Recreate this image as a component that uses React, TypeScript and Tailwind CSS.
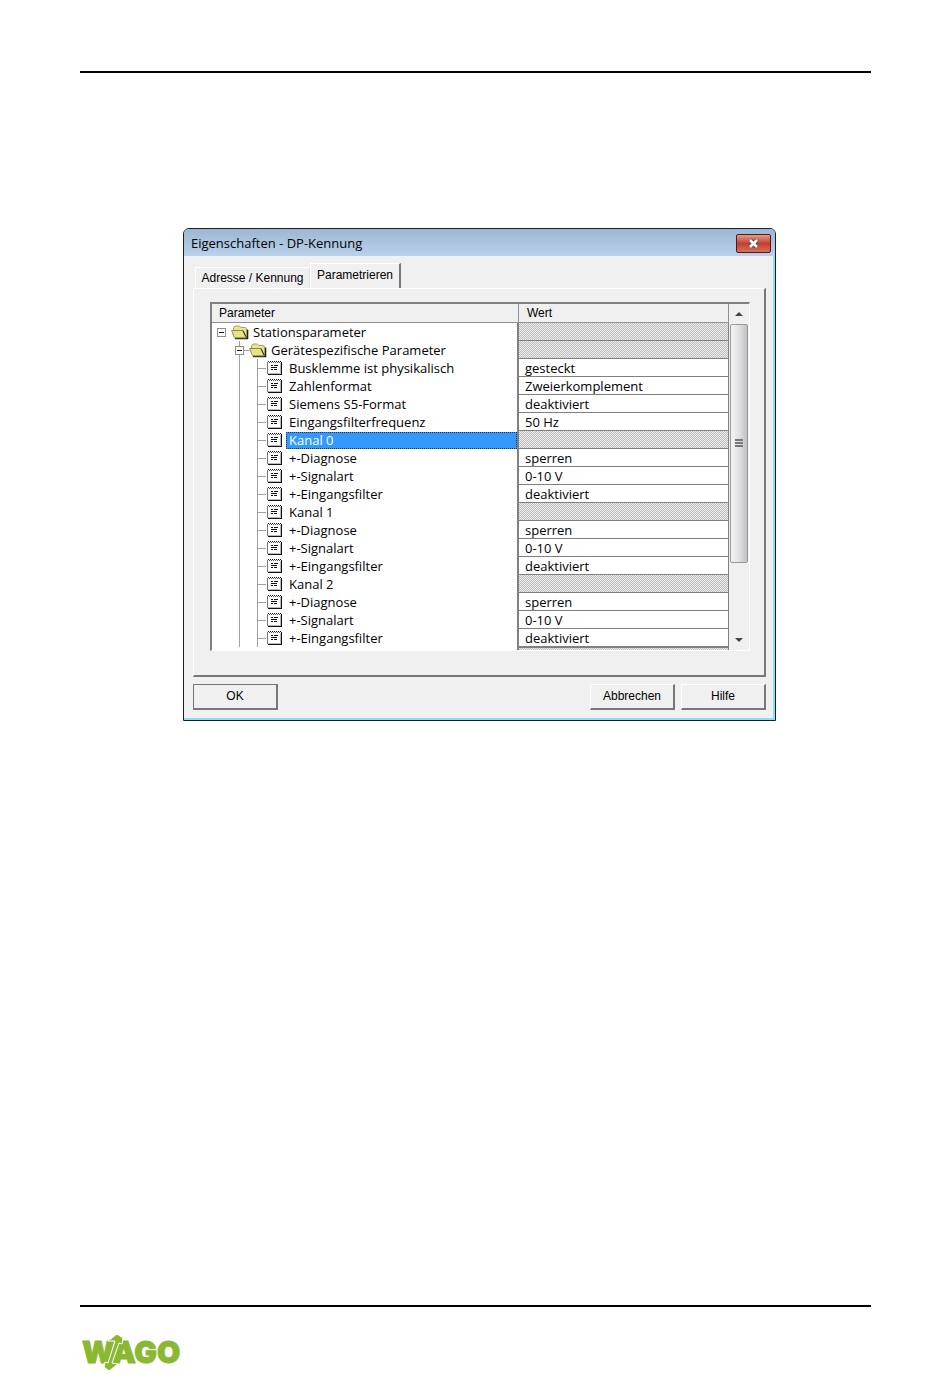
import clsx from 'clsx'

type Row = {
  label: string
  value?: string
  level: number
  selected?: boolean
}

const rows: Row[] = [
  { label: 'Stationsparameter', level: 0 },
  { label: 'Gerätespezifische Parameter', level: 1 },
  { label: 'Busklemme ist physikalisch', value: 'gesteckt', level: 2 },
  { label: 'Zahlenformat', value: 'Zweierkomplement', level: 2 },
  { label: 'Siemens S5-Format', value: 'deaktiviert', level: 2 },
  { label: 'Eingangsfilterfrequenz', value: '50 Hz', level: 2 },
  { label: 'Kanal 0', level: 2, selected: true },
  { label: '+-Diagnose', value: 'sperren', level: 2 },
  { label: '+-Signalart', value: '0-10 V', level: 2 },
  { label: '+-Eingangsfilter', value: 'deaktiviert', level: 2 },
  { label: 'Kanal 1', level: 2 },
  { label: '+-Diagnose', value: 'sperren', level: 2 },
  { label: '+-Signalart', value: '0-10 V', level: 2 },
  { label: '+-Eingangsfilter', value: 'deaktiviert', level: 2 },
  { label: 'Kanal 2', level: 2 },
  { label: '+-Diagnose', value: 'sperren', level: 2 },
  { label: '+-Signalart', value: '0-10 V', level: 2 },
  { label: '+-Eingangsfilter', value: 'deaktiviert', level: 2 },
]

const hatch =
  'bg-[repeating-conic-gradient(#c0c0c0_0%_25%,#ececec_0%_50%)] bg-[length:2px_2px]'

function Collapse({ root }: { root?: boolean }) {
  return (
    <svg className="h-[18px] w-[18px] shrink-0" viewBox="0 0 18 18" shapeRendering="crispEdges" fill="none">
      {!root && <path d="M8.5 0v5M8.5 14v4M13 9.5h5" stroke="#a0a0a0" />}
      <rect x="4.5" y="5.5" width="8" height="8" fill="#fff" stroke="#8c8c8c" />
      <path d="M6 9.5h5" stroke="#111" />
    </svg>
  )
}

function Guide({ branch }: { branch?: boolean }) {
  return (
    <svg className="h-[18px] w-[18px] shrink-0" viewBox="0 0 18 18" shapeRendering="crispEdges" fill="none">
      <path d={branch ? 'M8.5 0v18M9 9.5h8' : 'M8.5 0v18'} stroke="#a0a0a0" />
    </svg>
  )
}

function FolderIcon() {
  return (
    <svg className="h-[18px] w-[18px] shrink-0" viewBox="0 0 18 18">
      <path d="M4 15.5h12.500V6.500" fill="none" stroke="#222" strokeWidth="1.600" />
      <path d="M2.500 7V4.500L4 3h4.500l1.500 1.500h4.500l1 1.500v8.500H5z" fill="#e9e58c" stroke="#a3a057" />
      <path d="M.6 7.500h10.900l3.500 7.300H3.500z" fill="#f1ef9c" stroke="#8d8a3c" />
      <path d="M2.500 9h9M3.500 11h9M4.500 13h9" stroke="#c2c25c" strokeDasharray="1 1" />
      <path d="M12 7.500l3.500 7" stroke="#333" />
    </svg>
  )
}

function SheetIcon() {
  return (
    <svg className="h-[18px] w-[18px] shrink-0" viewBox="0 0 18 18" shapeRendering="crispEdges" fill="none">
      <path d="M.5 3v12" stroke="#777" />
      <path d="M1 2.500h13" stroke="#111" strokeDasharray="1 1" />
      <path d="M2 3.500h12" stroke="#555" strokeDasharray="1 1" />
      <path d="M1 15.500h14M14.500 3v13" stroke="#111" />
      <path d="M1 14.500h13M13.500 4v11" stroke="#bbb" />
      <path d="M4 6.500h2M7 6.500h4M4 8.500h6M4 10.500h2M7 10.500h3" stroke="#111" />
    </svg>
  )
}

function ParameterRow({ row }: { row: Row }) {
  return (
    <tr className="h-[18px]">
      <td className="border-r-2 border-[#808080] p-0 pl-px">
        <div className="flex h-[18px] items-center">
          {row.level === 0 && <Collapse root />}
          {row.level === 1 && (
            <>
              <span className="w-[18px] shrink-0" />
              <Collapse />
            </>
          )}
          {row.level === 2 && (
            <>
              <span className="w-[18px] shrink-0" />
              <Guide />
              <Guide branch />
            </>
          )}
          {row.level < 2 ? <FolderIcon /> : <SheetIcon />}
          <span
            className={clsx(
              'ml-px flex h-[17px] min-w-0 flex-1 items-center overflow-hidden whitespace-nowrap border border-dotted pl-[2px]',
              row.selected ? 'border-[#14325a] bg-[#3399ff] text-white' : 'border-transparent',
            )}
          >
            {row.label}
          </span>
        </div>
      </td>
      <td className={clsx('border-b border-r border-[#808080] p-0 pl-[6px] whitespace-nowrap', !row.value && hatch)}>
        {row.value}
      </td>
    </tr>
  )
}

function ScrollBar() {
  return (
    <div className="flex w-[20px] shrink-0 flex-col bg-[#f0f0f0]">
      <button aria-label="Nach oben" className="flex h-5 items-center justify-center">
        <svg className="h-[4px] w-[8px]" viewBox="0 0 8 4">
          <path d="M0 4 4 0l4 4z" fill="#444" />
        </svg>
      </button>
      <div className="flex-1 px-px">
        <div className="flex h-[78%] flex-col items-center justify-center gap-px rounded-[2px] border border-[#999] bg-gradient-to-r from-[#f5f5f5] via-[#e2e2e4] to-[#bfc0c4]">
          <span className="h-[2px] w-[8px] bg-[#777]" />
          <span className="h-[2px] w-[8px] bg-[#777]" />
          <span className="h-[2px] w-[8px] bg-[#777]" />
        </div>
      </div>
      <button aria-label="Nach unten" className="flex h-5 items-center justify-center">
        <svg className="h-[4px] w-[8px]" viewBox="0 0 8 4">
          <path d="M0 0h8L4 4z" fill="#444" />
        </svg>
      </button>
    </div>
  )
}

function DialogButton({ label, isDefault }: { label: string; isDefault?: boolean }) {
  return (
    <button
      className={clsx(
        'h-[26px] w-[85px] border-t border-l border-r-2 border-b-2 bg-[#f0f0f0] pb-px',
        isDefault ? 'border-[#777]' : 'border-t-white border-r-[#777] border-b-[#777] border-l-white',
      )}
    >
      {label}
    </button>
  )
}

function PropertiesDialog() {
  return (
    <section
      aria-label="Eigenschaften - DP-Kennung"
      className="rounded-t-[6px] border border-[#15222e] bg-[#f0f0f0] font-['Liberation_Sans',sans-serif] text-[12px] text-black"
    >
      <div className="flex h-[27px] items-center justify-between rounded-t-[5px] bg-gradient-to-b from-[#9db7d3] to-[#bad1ea] pl-[7px] pr-[4px]">
        <h1 className="pt-[3px] font-['Open_Sans',sans-serif] text-[13px]">Eigenschaften - DP-Kennung</h1>
        <button
          aria-label="Schließen"
          className="mt-[2px] flex h-[19px] w-[35px] items-center justify-center rounded-[2px] border border-[#4f1a1c] bg-gradient-to-b from-[#e39a8c] via-[#c1402d] to-[#d4705a]"
        >
          <svg className="h-[11px] w-[13px]" viewBox="0 0 13 11">
            <path d="M3 2l7 7M10 2l-7 7" stroke="#5b4444" strokeWidth="4.500" />
            <path d="M3 2l7 7M10 2l-7 7" stroke="#fff" strokeWidth="2.600" />
          </svg>
        </button>
      </div>

      <div className="border-r-2 border-b-2 border-[#8fdcf5] pt-[7px] pr-[7px] pb-[8px] pl-[9px]">
        <div role="tablist" className="flex items-end pl-[2px]">
          <button
            role="tab"
            aria-selected="false"
            className="h-[21px] w-[115px] whitespace-nowrap border-t border-l border-r border-white border-r-[#e0e0e0]"
          >
            Adresse / Kennung
          </button>
          <button
            role="tab"
            aria-selected="true"
            className="h-[25px] w-[91px] border-t border-l border-r-2 border-white border-r-[#777] pb-[2px]"
          >
            Parametrieren
          </button>
        </div>

        <div className="border-t border-l border-r-2 border-b-2 border-white border-r-[#777] border-b-[#777] pt-[13px] pr-[14px] pb-[24px] pl-[16px]">
          <div className="border-t-2 border-l-2 border-r border-b border-[#808080] border-r-white border-b-white bg-white">
            <div className="flex">
              <div className="min-w-0 flex-1">
                <table className="w-full table-fixed border-separate border-spacing-0 font-['Open_Sans',sans-serif] text-[13px] leading-[16px]">
                  <thead className="bg-[#f0f0f0] font-['Liberation_Sans',sans-serif] text-[12px]">
                    <tr className="h-[19px]">
                      <th className="border-r border-b border-[#909090] p-0 pl-[7px] text-left font-normal">
                        Parameter
                      </th>
                      <th className="w-[210px] border-r border-b border-[#909090] p-0 pl-[8px] text-left font-normal">
                        Wert
                      </th>
                    </tr>
                  </thead>
                  <tbody>
                    {rows.map((row, i) => (
                      <ParameterRow key={i} row={row} />
                    ))}
                  </tbody>
                </table>
                {/* upper edge of the next channel row */}
                <div className="flex h-[3px]">
                  <div className="flex-1 border-r-2 border-[#808080]" />
                  <div className={clsx('w-[210px] border-r border-t border-[#808080]', hatch)} />
                </div>
              </div>
              <ScrollBar />
            </div>
          </div>
        </div>

        <div className="flex gap-[6px] pt-[7px]">
          <DialogButton label="OK" isDefault />
          <span className="flex-1" />
          <DialogButton label="Abbrechen" />
          <DialogButton label="Hilfe" />
        </div>
      </div>
    </section>
  )
}

function WagoLogo() {
  return (
    <svg role="img" aria-label="WAGO" className="h-[38px] w-[104px]" viewBox="0 0 104 38">
      <text x="2" y="29" fill="#8ab833" stroke="#8ab833" strokeWidth="1" className="font-['Inter',sans-serif] text-[30px] font-black">
        WAGO
      </text>
      <path
        d="M28 7 37 0l6 4-1 6-3-1-7 20 6 1-9 7-5-4 1-5 3 1 7-22z"
        fill="#8ab833"
        stroke="#fff"
        strokeWidth="1"
      />
    </svg>
  )
}

export default function App() {
  return (
    <div className="flex min-h-screen flex-col bg-white pt-[71px] pr-[79px] pb-[6px] pl-[80px]">
      <header className="border-t-2 border-black" />
      <main className="flex-1 pt-[155px] pr-[95px] pb-10 pl-[103px]">
        <PropertiesDialog />
      </main>
      <footer className="border-t-2 border-black pt-[27px]">
        <WagoLogo />
      </footer>
    </div>
  )
}
